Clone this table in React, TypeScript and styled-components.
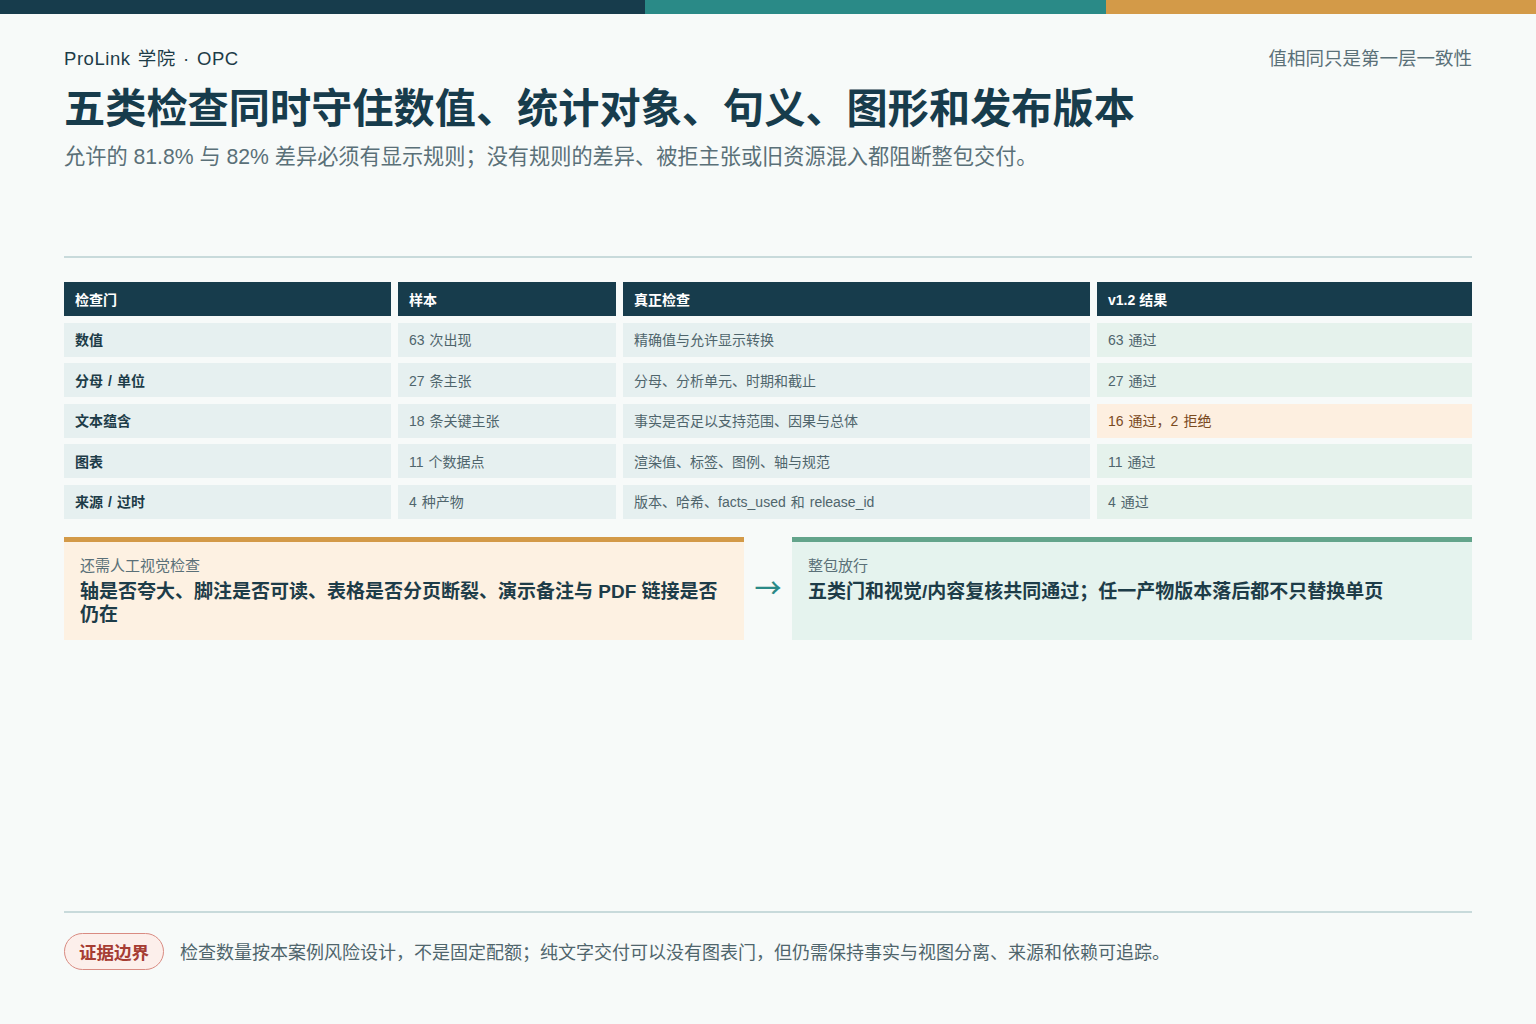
import React from "react";
import styled, { createGlobalStyle } from "styled-components";

const GlobalStyle = createGlobalStyle`
  html, body { margin: 0; padding: 0; }
  body {
    background: #f7faf9;
    font-family: "Liberation Sans", "Noto Sans CJK SC", sans-serif;
    color: #173c4c;
  }
  * { box-sizing: border-box; }
`;

const Page = styled.div`
  min-height: 100vh;
  display: flex;
  flex-direction: column;
`;

const Stripe = styled.div`
  display: flex;
  height: 14px;
`;

const StripeSeg = styled.div<{ $grow: number; $color: string }>`
  flex: ${(p) => p.$grow} 0 0;
  background: ${(p) => p.$color};
`;

const Main = styled.main`
  flex: 1;
  display: flex;
  flex-direction: column;
  padding: 31px 64px 0;
`;

const TopRow = styled.div`
  display: flex;
  justify-content: space-between;
  align-items: center;
  height: 24px;
`;

const Brand = styled.div`
  font-size: 18.5px;
  color: #1d3c48;
  letter-spacing: 0.03em;
  word-spacing: 0.08em;
`;

const Tagline = styled.div`
  font-size: 18.5px;
  color: #5a7078;
`;

const Title = styled.h1`
  margin: 14px 0 0;
  font-size: 41.2px;
  line-height: 52px;
  font-weight: 700;
  color: #173c4c;
`;

const Subtitle = styled.p`
  margin: 7px 0 0;
  font-size: 21.2px;
  line-height: 30px;
  color: #5a7078;
`;

const Divider = styled.div`
  margin-top: 84px;
  height: 2px;
  background: #c8dadb;
`;

const Table = styled.div`
  margin-top: 24px;
  display: grid;
  grid-template-columns: 327fr 218fr 467fr 375fr;
  column-gap: 7px;
  row-gap: 6.5px;
  grid-auto-rows: 34px;
`;

const HeadCell = styled.div`
  background: #173c4c;
  color: #ffffff;
  font-weight: 700;
  font-size: 14px;
  display: flex;
  align-items: center;
  padding-left: 11px;
  padding-bottom: 1px;
`;

type Tone = "plain" | "key" | "ok" | "warn";

const Cell = styled.div<{ $tone: Tone }>`
  display: flex;
  align-items: center;
  padding-left: 11px;
  padding-bottom: 1px;
  font-size: 14px;
  word-spacing: 0.08em;
  background: ${(p) =>
    p.$tone === "ok" ? "#e5f2ec" : p.$tone === "warn" ? "#fdefe0" : "#e6f0f0"};
  color: ${(p) =>
    p.$tone === "key" ? "#1d3c48" : p.$tone === "warn" ? "#7a4a1e" : "#4f656c"};
  font-weight: ${(p) => (p.$tone === "key" ? 700 : 400)};
`;

const CardRow = styled.div`
  margin-top: 18px;
  display: grid;
  grid-template-columns: 1fr 48px 1fr;
  align-items: stretch;
`;

const Card = styled.div<{ $accent: string; $bg: string }>`
  background: ${(p) => p.$bg};
  border-top: 5px solid ${(p) => p.$accent};
  padding: 14px 16px 12px;
  min-height: 103px;
`;

const CardLabel = styled.div`
  font-size: 15px;
  line-height: 20px;
  color: #5a7078;
`;

const CardText = styled.div`
  margin-top: 4px;
  font-size: 19px;
  line-height: 23px;
  font-weight: 700;
  color: #1d3c48;
`;

const Arrow = styled.div`
  display: flex;
  align-items: center;
  justify-content: center;
  font-family: "Noto Sans CJK SC", sans-serif;
  font-size: 27px;
  font-weight: 500;
  color: #2a8a87;
  padding-bottom: 3px;
`;

const Footer = styled.footer`
  margin: 0 64px;
  border-top: 2px solid #c8dadb;
  padding: 20px 0 54px;
  display: flex;
  align-items: center;
  gap: 16px;
`;

const Pill = styled.div`
  height: 37px;
  padding: 0 14px;
  border: 1px solid #d98b82;
  background: #fcefeb;
  border-radius: 19px;
  color: #a63d33;
  font-weight: 700;
  font-size: 17.5px;
  display: flex;
  align-items: center;
  padding-bottom: 1px;
`;

const FooterText = styled.div`
  font-size: 18px;
  color: #4f656c;
  padding-bottom: 1px;
`;

const rows: { gate: string; sample: string; check: string; result: string; warn?: boolean }[] = [
  { gate: "数值", sample: "63 次出现", check: "精确值与允许显示转换", result: "63 通过" },
  { gate: "分母 / 单位", sample: "27 条主张", check: "分母、分析单元、时期和截止", result: "27 通过" },
  { gate: "文本蕴含", sample: "18 条关键主张", check: "事实是否足以支持范围、因果与总体", result: "16 通过，2 拒绝", warn: true },
  { gate: "图表", sample: "11 个数据点", check: "渲染值、标签、图例、轴与规范", result: "11 通过" },
  { gate: "来源 / 过时", sample: "4 种产物", check: "版本、哈希、facts_used 和 release_id", result: "4 通过" },
];

export default function App() {
  return (
    <Page>
      <GlobalStyle />
      <Stripe>
        <StripeSeg $grow={645} $color="#173c4c" />
        <StripeSeg $grow={461} $color="#2a8a87" />
        <StripeSeg $grow={430} $color="#d39a48" />
      </Stripe>
      <Main>
        <TopRow>
          <Brand>ProLink 学院 · OPC</Brand>
          <Tagline>值相同只是第一层一致性</Tagline>
        </TopRow>
        <Title>五类检查同时守住数值、统计对象、句义、图形和发布版本</Title>
        <Subtitle>
          允许的 81.8% 与 82% 差异必须有显示规则；没有规则的差异、被拒主张或旧资源混入都阻断整包交付。
        </Subtitle>
        <Divider />
        <Table>
          <HeadCell>检查门</HeadCell>
          <HeadCell>样本</HeadCell>
          <HeadCell>真正检查</HeadCell>
          <HeadCell>v1.2 结果</HeadCell>
          {rows.map((r) => (
            <React.Fragment key={r.gate}>
              <Cell $tone="key">{r.gate}</Cell>
              <Cell $tone="plain">{r.sample}</Cell>
              <Cell $tone="plain">{r.check}</Cell>
              <Cell $tone={r.warn ? "warn" : "ok"}>{r.result}</Cell>
            </React.Fragment>
          ))}
        </Table>
        <CardRow>
          <Card $accent="#d39a48" $bg="#fdf1e2">
            <CardLabel>还需人工视觉检查</CardLabel>
            <CardText>轴是否夸大、脚注是否可读、表格是否分页断裂、演示备注与 PDF 链接是否仍在</CardText>
          </Card>
          <Arrow>→</Arrow>
          <Card $accent="#63a48b" $bg="#e5f3ee">
            <CardLabel>整包放行</CardLabel>
            <CardText>五类门和视觉/内容复核共同通过；任一产物版本落后都不只替换单页</CardText>
          </Card>
        </CardRow>
      </Main>
      <Footer>
        <Pill>证据边界</Pill>
        <FooterText>
          检查数量按本案例风险设计，不是固定配额；纯文字交付可以没有图表门，但仍需保持事实与视图分离、来源和依赖可追踪。
        </FooterText>
      </Footer>
    </Page>
  );
}
